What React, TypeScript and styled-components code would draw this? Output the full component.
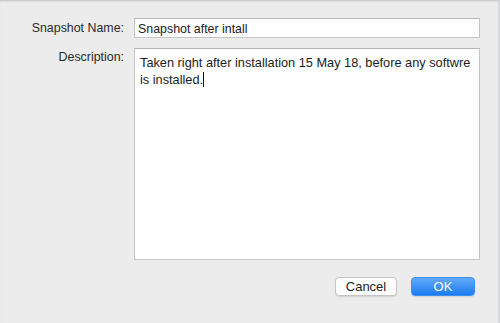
import React from 'react';
import styled, { createGlobalStyle } from 'styled-components';

const GlobalStyle = createGlobalStyle`
  html, body {
    margin: 0;
    padding: 0;
    background: #ececec;
  }
  body {
    font-family: "Liberation Sans", Arial, sans-serif;
    -webkit-font-smoothing: antialiased;
  }
`;

const Sheet = styled.div`
  width: 500px;
  height: 323px;
  box-sizing: border-box;
  background: #ececec;
  box-shadow: inset 0 2px 2px -1px rgba(0, 0, 0, 0.18);
  border-right: 2px solid #d6d8dc;
  padding: 18px 18px 0 0;
  display: flex;
  flex-direction: column;
`;

const Form = styled.div`
  display: grid;
  grid-template-columns: 124px 1fr;
  column-gap: 10px;
  row-gap: 10px;
`;

const Label = styled.label<{ $top: number }>`
  text-align: right;
  font-size: 12.4px;
  color: #2b2b2b;
  padding-top: ${({ $top }) => $top}px;
`;

const Field = styled.div`
  height: 20px;
  box-sizing: border-box;
  background: #fff;
  border: 1px solid #c6c6c6;
  border-top-color: #b5b5b5;
  font-size: 12.4px;
  color: #1c1c1c;
  padding: 3px 0 0 3px;
  white-space: nowrap;
`;

const TextArea = styled.div`
  height: 212px;
  box-sizing: border-box;
  background: #fff;
  border: 1px solid #c6c6c6;
  border-top-color: #b5b5b5;
  font-size: 12.75px;
  line-height: 17px;
  color: #1c1c1c;
  padding: 5px 2px 0 5px;
`;

const Caret = styled.span`
  display: inline-block;
  width: 1px;
  height: 15px;
  background: #111;
  vertical-align: -3px;
`;

const Buttons = styled.div`
  display: flex;
  justify-content: flex-end;
  gap: 14px;
  margin-top: 17px;
  padding-right: 5px;
`;

const Button = styled.button<{ $primary?: boolean }>`
  height: 19px;
  width: ${({ $primary }) => ($primary ? 64 : 62)}px;
  box-sizing: border-box;
  border-radius: 4px;
  font-family: "Liberation Sans", Arial, sans-serif;
  font-size: 13px;
  padding: 0;
  line-height: 17px;
  cursor: pointer;
  color: ${({ $primary }) => ($primary ? '#fff' : '#1d1d1d')};
  background: ${({ $primary }) =>
    $primary ? 'linear-gradient(#63aaf8, #1b7cf0)' : '#fff'};
  border: 1px solid ${({ $primary }) => ($primary ? '#3b8ef2' : '#c4c4c4')};
  box-shadow: 0 1px 1px rgba(0, 0, 0, 0.1);
`;

const App = () => (
  <>
    <GlobalStyle />
    <Sheet>
      <Form>
        <Label $top={3}>Snapshot Name:</Label>
        <Field>Snapshot after intall</Field>
        <Label $top={2}>Description:</Label>
        <TextArea>
          Taken right after installation 15 May 18, before any softwre is installed.
          <Caret />
        </TextArea>
      </Form>
      <Buttons>
        <Button>Cancel</Button>
        <Button $primary>OK</Button>
      </Buttons>
    </Sheet>
  </>
);

export default App;
